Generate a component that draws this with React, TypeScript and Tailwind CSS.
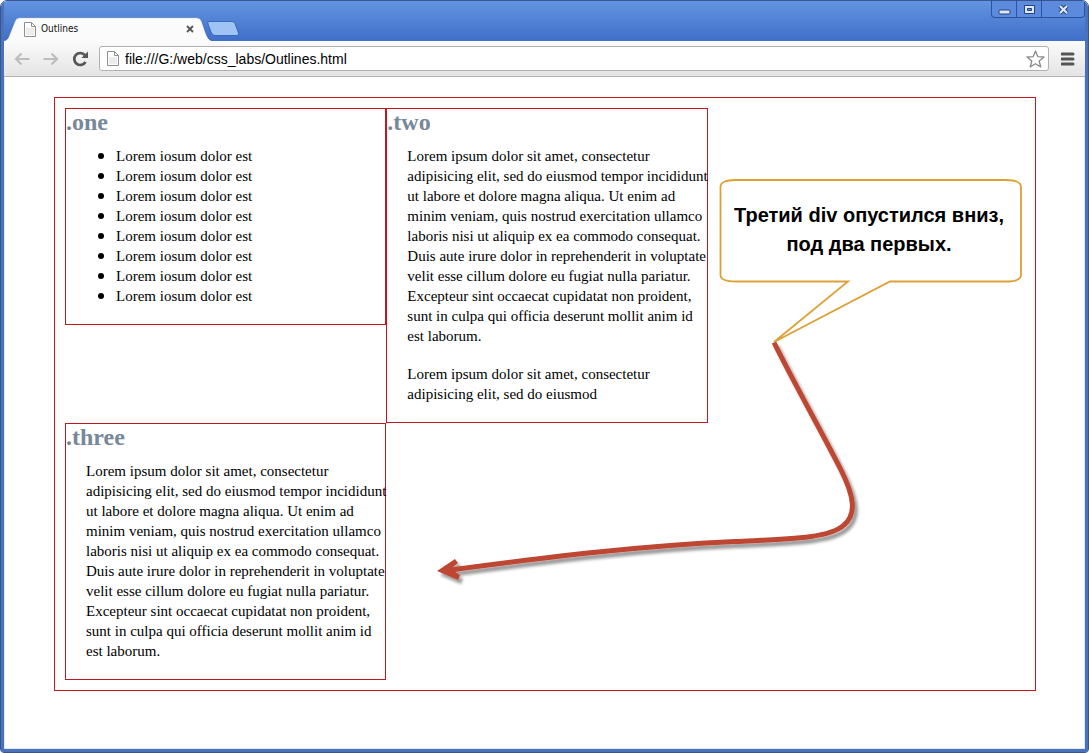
import { useState } from "react";

const LOREM =
  "Lorem ipsum dolor sit amet, consectetur adipisicing elit, sed do eiusmod tempor incididunt ut labore et dolore magna aliqua. Ut enim ad minim veniam, quis nostrud exercitation ullamco laboris nisi ut aliquip ex ea commodo consequat. Duis aute irure dolor in reprehenderit in voluptate velit esse cillum dolore eu fugiat nulla pariatur. Excepteur sint occaecat cupidatat non proident, sunt in culpa qui officia deserunt mollit anim id est laborum.";

const ITEMS = Array.from({ length: 8 }, () => "Lorem iosum dolor est");

function PageIcon() {
  return (
    <svg width="12" height="15" viewBox="0 0 12 15" className="shrink-0" aria-hidden="true">
      <path d="M0.5 0.5H7.5L11.5 4.5V14.5H0.5Z" fill="#fff" stroke="#8f8f8f" />
      <path d="M2 6H10V13H2Z" fill="#ececec" />
      <path d="M7.5 0.5V4.5H11.5" fill="none" stroke="#8f8f8f" />
    </svg>
  );
}

function WindowControls() {
  return (
    <div className="flex h-[17px] overflow-hidden rounded-b border border-t-0 border-[#2a52a0] bg-[#5c8bdd]">
      <button aria-label="Minimize" className="flex w-[25px] items-center justify-center border-r border-[#2a52a0]">
        <svg width="13" height="13" viewBox="0 0 13 13">
          <rect x="1" y="7" width="11" height="4" rx="1" fill="#dfe8f8" stroke="#23427f" />
        </svg>
      </button>
      <button aria-label="Maximize" className="flex w-[25px] items-center justify-center border-r border-[#2a52a0]">
        <svg width="13" height="13" viewBox="0 0 13 13">
          <path d="M1.5 2.5H11.5V10.5H1.5ZM4.5 5.5V7.5H8.5V5.5Z" fill="#dfe8f8" fillRule="evenodd" stroke="#23427f" />
        </svg>
      </button>
      <button aria-label="Close window" className="flex w-[42px] items-center justify-center">
        <svg width="13" height="13" viewBox="0 0 13 13">
          <path d="M3 3L10 10M10 3L3 10" stroke="#23427f" strokeWidth="4.2" />
          <path d="M3 3L10 10M10 3L3 10" stroke="#dfe8f8" strokeWidth="2.2" />
        </svg>
      </button>
    </div>
  );
}

function TitleBar() {
  return (
    <header className="flex h-[40px] shrink-0 items-start justify-between bg-linear-to-b from-[#6294e0] to-[#3f6fc9]">
      <div className="flex h-full items-end">
        <div className="relative flex h-[24px] w-[208px] items-center pr-[14px] pl-[20px]">
          <svg className="absolute inset-0" width="208" height="24" viewBox="0 0 210 24" aria-hidden="true">
            <path
              d="M0 24C3 23 4 22 5 19L11 4Q12.500 0.500 16 0.500H194Q198 0.500 199.500 4L204 17Q206 23 210 24Z"
              fill="#fbfbfb"
            />
            <path
              d="M0 24C3 23 4 22 5 19L11 4Q12.500 0.500 16 0.500H194Q198 0.500 199.500 4L204 17Q206 23 210 24"
              fill="none"
              stroke="#3763b4"
              strokeOpacity="0.6"
            />
          </svg>
          <div className="relative flex flex-1 items-center">
            <PageIcon />
            <span className="ml-[5px] flex-1 font-['DejaVu_Sans_Condensed','DejaVu_Sans',sans-serif] text-[10px] leading-4 text-[#111]">
              Outlines
            </span>
            <button aria-label="Close tab" className="flex size-4 items-center justify-center">
              <svg width="8" height="8" viewBox="0 0 8 8">
                <path d="M1 1L7 7M7 1L1 7" stroke="#555" strokeWidth="1.8" />
              </svg>
            </button>
          </div>
        </div>
        <button aria-label="New tab" className="mb-[4px] -ml-[7px] h-[17px]">
          <svg width="36" height="17" viewBox="0 0 36 17">
            <path
              d="M4 1.500H27Q29 1.500 30 3.500L33.500 13Q34 15.500 32 15.500H10Q7.500 15.500 6.500 13L3 4Q2 1.500 4 1.500Z"
              fill="#9fc3f3"
              stroke="#3b68ba"
            />
          </svg>
        </button>
      </div>
      <WindowControls />
    </header>
  );
}

function Toolbar() {
  const [url, setUrl] = useState("file:///G:/web/css_labs/Outlines.html");
  return (
    <div className="flex h-[36px] shrink-0 items-center border-b border-[#b4b4b4] bg-linear-to-b from-[#fbfbfb] to-[#e4e4e4] px-[10px]">
      <button aria-label="Back" className="w-[29px]">
        <svg width="16" height="14" viewBox="0 0 16 14">
          <path d="M15.500 7H2M7.500 1.500L2 7L7.500 12.500" fill="none" stroke="#bdbdbd" strokeWidth="2.200" />
        </svg>
      </button>
      <button aria-label="Forward" className="w-[29px]">
        <svg width="16" height="14" viewBox="0 0 16 14">
          <path d="M0.500 7H14M8.500 1.500L14 7L8.500 12.500" fill="none" stroke="#bdbdbd" strokeWidth="2.200" />
        </svg>
      </button>
      <button aria-label="Reload" className="w-[27px]">
        <svg width="17" height="16" viewBox="0 0 17 16">
          <path d="M12.800 4A6 6 0 1 0 13.500 11" fill="none" stroke="#555" strokeWidth="2.700" />
          <path d="M16 0.500V7H9.500Z" fill="#555" />
        </svg>
      </button>
      <div className="flex h-[25px] flex-1 items-center rounded-[3px] border border-[#b0b0b0] bg-white pr-[3px] pl-[7px]">
        <PageIcon />
        <input
          aria-label="Address"
          value={url}
          onChange={(e) => setUrl(e.target.value)}
          className="ml-[6px] min-w-0 flex-1 bg-transparent font-['Liberation_Sans',Arial,sans-serif] text-[14px] leading-5 text-black outline-none"
        />
        <button aria-label="Bookmark this page">
          <svg width="19" height="18" viewBox="0 0 19 18">
            <path
              d="M9.500 1L11.800 6.600L18 7L13.200 11L14.800 17L9.500 13.700L4.200 17L5.800 11L1 7L7.200 6.600Z"
              fill="#fff"
              stroke="#8a8a8a"
              strokeWidth="1.300"
              strokeLinejoin="round"
            />
          </svg>
        </button>
      </div>
      <button aria-label="Menu" className="ml-[12px]">
        <svg width="14" height="14" viewBox="0 0 14 14">
          <path d="M1 2H12M1 7H12M1 12H12" stroke="#555" strokeWidth="3" strokeLinecap="round" />
        </svg>
      </button>
    </div>
  );
}

function Title({ children }: { children: string }) {
  return <h2 className="text-[24px] leading-[26px] font-bold text-[#778899]">{children}</h2>;
}

function Callout() {
  return (
    <aside className="absolute top-[80px] right-0 h-[420px] w-[600px]">
      <svg className="absolute inset-0" width="600" height="420" viewBox="0 0 600 420" aria-hidden="true">
        <defs>
          <filter id="arrow-shadow" x="-10%" y="-10%" width="120%" height="120%">
            <feDropShadow dx="3" dy="4" stdDeviation="1.800" floodColor="#000" floodOpacity="0.400" />
          </filter>
        </defs>
        <g filter="url(#arrow-shadow)">
          <path
            d="M339 164.500C358 203 392 264 406 292C419 318 422 336 409 347C394 361 350 361 300 363.500C204 368 120 378 12 392.500"
            fill="none"
            stroke="#bd4630"
            strokeWidth="5"
          />
          <path d="M2 393L20 381L23 385L17 390V392L25 397L23 402Z" fill="#bd4630" />
        </g>
        <path
          d="M301 2H570Q586 2 586 9V97Q586 103.500 570 103.500H455L339 164L413 103.500H301Q285.500 103.500 285.500 97V9Q285.500 2 301 2Z"
          fill="#fff"
          stroke="#dba137"
          strokeWidth="1.800"
        />
      </svg>
      <p className="relative mt-[23px] mr-[14px] ml-auto w-[304px] text-center font-['Liberation_Sans',Arial,sans-serif] text-[20px] leading-[29px] font-bold text-black">
        Третий div опустился вниз,
        <br />
        под два первых.
      </p>
    </aside>
  );
}

export default function App() {
  return (
    <div className="flex min-h-screen flex-col overflow-hidden rounded-t-[7px] rounded-b-[4px] border border-[#38558f] bg-white">
      <div className="flex flex-1 flex-col border-x-3 border-b-3 border-[#4a72bb]">
        <TitleBar />
        <Toolbar />
        <main className="flex-1 border-x border-b border-[#dcebfb] pt-[20px] pr-[48px] pb-[57px] pl-[49px] font-['Liberation_Serif','Times_New_Roman',serif] text-[15px] leading-[20px] text-black">
          <div className="relative border border-[#c4161c] pt-[10px] pr-[6px] pb-[10px] pl-[10px]">
            <div className="grid grid-cols-3 items-start">
              <section className="border border-[#c4161c] pb-[18px]">
                <Title>.one</Title>
                <ul className="mt-[11px] pl-[32px]">
                  {ITEMS.map((item, i) => (
                    <li
                      key={i}
                      className="flex items-center before:mr-[12px] before:size-[6px] before:rounded-full before:bg-black"
                    >
                      {item}
                    </li>
                  ))}
                </ul>
              </section>
              <section className="border border-[#c4161c] pb-[18px]">
                <Title>.two</Title>
                <p className="mt-[11px] -mr-[2px] pl-[20px]">{LOREM}</p>
                <p className="mt-[18px] pl-[20px]">
                  Lorem ipsum dolor sit amet, consectetur adipisicing elit, sed do eiusmod
                </p>
              </section>
              <section className="col-start-1 border border-[#c4161c] pb-[18px]">
                <Title>.three</Title>
                <p className="mt-[11px] -mr-[2px] pl-[20px]">{LOREM}</p>
              </section>
            </div>
            <Callout />
          </div>
        </main>
      </div>
    </div>
  );
}
